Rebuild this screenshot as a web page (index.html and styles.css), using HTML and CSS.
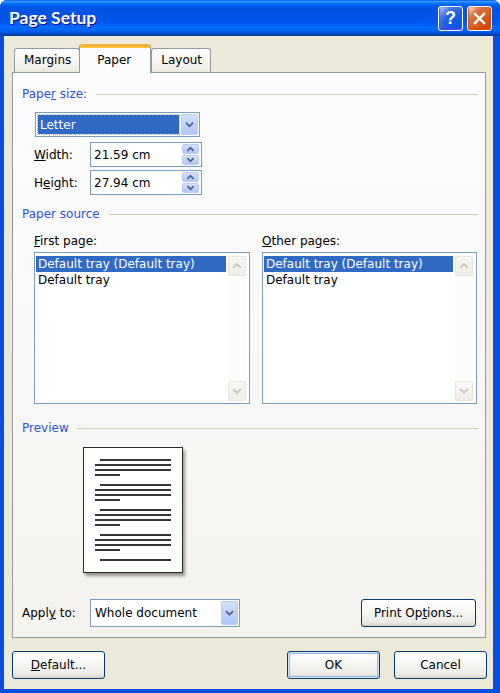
FILE: index.html
```html
<!DOCTYPE html>
<html>
<head>
<meta charset="UTF-8">
<title>Page Setup</title>
<link rel="stylesheet" href="styles.css">
</head>
<body>
<div class="window">
	<div class="titlebar">
		<span class="title">Page Setup</span>
		<span class="cap-btn help">?</span>
		<span class="cap-btn close">
			<svg width="13" height="13" viewBox="0 0 13 13"><path d="M2 2 L11 11 M11 2 L2 11" stroke="#fff" stroke-width="2.4" stroke-linecap="square"/></svg>
		</span>
	</div>
	<div class="client">
		<div class="tabs">
			<div class="tab">Margins</div>
			<div class="tab active">Paper</div>
			<div class="tab">Layout</div>
		</div>
		<div class="panel">
			<div class="group-head first"><span>Pape<u>r</u> size:</span></div>
			<div class="size-block">
				<div class="combo size-combo">
					<span class="combo-text"><span class="selected">Letter</span></span>
					<span class="drop"><svg width="17" height="21" viewBox="0 0 17 21"><path d="M4.5 8.5 L8.5 12.5 L12.5 8.5" fill="none" stroke="#4d6185" stroke-width="2"/></svg></span>
				</div>
				<div class="field-row">
					<span class="field-label"><u>W</u>idth:</span>
					<div class="spin">
						<span class="spin-text">21.59 cm</span>
						<span class="spin-btns">
							<span class="spin-btn"><svg width="17" height="10" viewBox="0 0 17 10"><path d="M5 7 L8.5 3.5 L12 7" fill="none" stroke="#4d6185" stroke-width="2"/></svg></span>
							<span class="spin-btn"><svg width="17" height="10" viewBox="0 0 17 10"><path d="M5 3 L8.5 6.5 L12 3" fill="none" stroke="#4d6185" stroke-width="2"/></svg></span>
						</span>
					</div>
				</div>
				<div class="field-row tight">
					<span class="field-label">H<u>e</u>ight:</span>
					<div class="spin">
						<span class="spin-text">27.94 cm</span>
						<span class="spin-btns">
							<span class="spin-btn"><svg width="17" height="10" viewBox="0 0 17 10"><path d="M5 7 L8.5 3.5 L12 7" fill="none" stroke="#4d6185" stroke-width="2"/></svg></span>
							<span class="spin-btn"><svg width="17" height="10" viewBox="0 0 17 10"><path d="M5 3 L8.5 6.5 L12 3" fill="none" stroke="#4d6185" stroke-width="2"/></svg></span>
						</span>
					</div>
				</div>
			</div>

			<div class="group-head source-head"><span>Paper source</span></div>
			<div class="sources">
				<div class="source">
					<div class="source-label"><u>F</u>irst page:</div>
					<div class="listbox">
						<div class="items">
							<div class="item selected">Default tray (Default tray)</div>
							<div class="item">Default tray</div>
						</div>
						<div class="vscroll">
							<span class="sb-btn"><svg width="17" height="20" viewBox="0 0 17 20"><path d="M4.5 12 L8.5 8 L12.5 12" fill="none" stroke="#c9c7ba" stroke-width="2"/></svg></span>
							<span class="sb-btn"><svg width="17" height="20" viewBox="0 0 17 20"><path d="M4.5 8 L8.5 12 L12.5 8" fill="none" stroke="#c9c7ba" stroke-width="2"/></svg></span>
						</div>
					</div>
				</div>
				<div class="source">
					<div class="source-label"><u>O</u>ther pages:</div>
					<div class="listbox">
						<div class="items">
							<div class="item selected">Default tray (Default tray)</div>
							<div class="item">Default tray</div>
						</div>
						<div class="vscroll">
							<span class="sb-btn"><svg width="17" height="20" viewBox="0 0 17 20"><path d="M4.5 12 L8.5 8 L12.5 12" fill="none" stroke="#c9c7ba" stroke-width="2"/></svg></span>
							<span class="sb-btn"><svg width="17" height="20" viewBox="0 0 17 20"><path d="M4.5 8 L8.5 12 L12.5 8" fill="none" stroke="#c9c7ba" stroke-width="2"/></svg></span>
						</div>
					</div>
				</div>
			</div>

			<div class="group-head preview-head"><span>Preview</span></div>
			<div class="sheet">
				<div class="para"><i class="ln indent"></i><i class="ln"></i><i class="ln"></i><i class="ln short"></i></div>
				<div class="para"><i class="ln indent"></i><i class="ln"></i><i class="ln"></i><i class="ln short"></i></div>
				<div class="para"><i class="ln indent"></i><i class="ln"></i><i class="ln"></i><i class="ln short"></i></div>
				<div class="para"><i class="ln indent"></i><i class="ln"></i><i class="ln"></i><i class="ln short"></i></div>
				<div class="para"><i class="ln indent"></i></div>
			</div>

			<div class="apply-row">
				<span class="apply-label">Appl<u>y</u> to:</span>
				<div class="combo apply-combo">
					<span class="combo-text">Whole document</span>
					<span class="drop"><svg width="17" height="24" viewBox="0 0 17 24"><path d="M4.5 10 L8.5 14 L12.5 10" fill="none" stroke="#4d6185" stroke-width="2"/></svg></span>
				</div>
				<button class="btn print-btn">Print Op<u>t</u>ions...</button>
			</div>
		</div>
		<div class="footer">
			<button class="btn"><u>D</u>efault...</button>
			<span class="spacer"></span>
			<button class="btn default">OK</button>
			<button class="btn">Cancel</button>
		</div>
	</div>
</div>
</body>
</html>
```

FILE: styles.css
```css
html, body {
	margin: 0;
	padding: 0;
	background: #ffffff;
}
body {
	font-family: "DejaVu Sans", Verdana, sans-serif;
	font-size: 12px;
	color: #000;
}
u {
	text-decoration: underline;
	text-underline-offset: 1px;
}
.window {
	width: 500px;
	height: 693px;
	display: flex;
	flex-direction: column;
	border-radius: 7px 7px 0 0;
	overflow: hidden;
	background: #0a4edf;
}

/* title bar */
.titlebar {
	height: 36px;
	flex: none;
	display: flex;
	align-items: center;
	padding: 0 8px 0 9px;
	gap: 4px;
	background: linear-gradient(to bottom, #0058ee 0%, #3593ff 4%, #288eff 6%, #127dff 8%, #036ffc 10%, #0262ee 14%, #0057e5 20%, #0054e3 24%, #0055eb 56%, #005bf5 66%, #026afe 76%, #0062ef 86%, #0052d6 92%, #0040ab 97%, #003092 100%);
}
.title {
	flex: 1;
	color: #fff;
	font-family: Lato, "Liberation Sans", sans-serif;
	font-weight: bold;
	font-size: 17.5px;
	text-shadow: 1px 1px #0f1089;
	padding-bottom: 1px;
}
.cap-btn {
	width: 23px;
	height: 23px;
	border: 1px solid #fff;
	border-radius: 3px;
	display: flex;
	align-items: center;
	justify-content: center;
	color: #fff;
	font-weight: bold;
	font-size: 18px;
	font-family: "Liberation Sans", sans-serif;
}
.help {
	background: radial-gradient(circle at 90% 90%, #0054e9 0%, #2263d5 55%, #4479e4 70%, #a3bbec 90%, #fff 100%);
	box-shadow: inset 0 -1px 2px 1px #4646ff;
}
.close {
	background: radial-gradient(circle at 90% 90%, #cc4600 0%, #dc6527 55%, #cd7546 70%, #ffccb2 90%, #fff 100%);
	box-shadow: inset 0 -1px 2px 1px #da4600;
}

/* client area */
.client {
	flex: 1;
	background: #ece9d8;
	margin: 0 7px 4px 4px;
	padding: 8px 7px 0 8px;
	display: flex;
	flex-direction: column;
}
.tabs {
	height: 28px;
	display: flex;
	align-items: flex-end;
	padding-left: 2px;
	position: relative;
	z-index: 1;
}
.tab {
	height: 23px;
	line-height: 22px;
	padding: 0 8px 0 9px;
	border: 1px solid #919b9c;
	border-bottom: none;
	border-radius: 3px 3px 0 0;
	background: linear-gradient(#fefefe, #f4f3ee 70%, #e8e7df);
	margin-right: -1px;
}
.tab.active {
	height: 26px;
	line-height: 26px;
	padding: 0 19px 0 17px;
	margin: 0 0 -1px 0;
	background: #fcfcfe;
	border-top: 3px solid #f8b33a;
	border-radius: 3px 3px 0 0;
	box-shadow: inset 0 1px 0 #ffc73c;
	position: relative;
}

.panel {
	height: 566px;
	box-sizing: border-box;
	border: 1px solid #919b9c;
	background: linear-gradient(#fcfcfe, #f4f3ee);
	padding: 0 9px 10px 9px;
	display: flex;
	flex-direction: column;
}
.group-head {
	height: 14px;
	line-height: 14px;
	display: flex;
	align-items: center;
	gap: 9px;
	color: #2c55d6;
	margin-right: -2px;
}
.group-head::after {
	content: "";
	flex: 1;
	height: 1px;
	background: #d0d0bf;
	margin-top: 1px;
}
.group-head.first { margin-top: 14px; }
.group-head.source-head { margin-top: 12px; }
.group-head.preview-head { margin-top: 17px; gap: 8px; }

.size-block {
	margin-left: 12px;
	margin-top: 11px;
}

/* combo box */
.combo {
	display: flex;
	box-sizing: border-box;
	border: 1px solid #7f9db9;
	background: #fff;
	padding: 1px;
}
.combo-text {
	flex: 1;
	display: flex;
	align-items: center;
	padding-left: 2px;
}
.combo-text .selected {
	flex: 1;
	align-self: stretch;
	display: flex;
	align-items: center;
	background: #316ac5;
	color: #fff;
	padding-left: 2px;
	margin: 1px 2px 1px -1px;
	outline: 1px dotted #9cb4e0;
}
.drop {
	width: 17px;
	flex: none;
	border-radius: 2px;
	border: 1px solid #b9ccf7;
	box-sizing: border-box;
	background: linear-gradient(#d3e0fc, #c1d3fb 50%, #b0c6f8);
	display: flex;
	align-items: center;
	justify-content: center;
}
.size-combo {
	width: 165px;
	height: 25px;
	margin-left: 1px;
}

.field-row {
	display: flex;
	align-items: center;
	margin-top: 5px;
	height: 25px;
}
.field-row.tight { margin-top: 3px; }
.field-label {
	width: 56px;
	flex: none;
}
.spin {
	width: 112px;
	height: 25px;
	box-sizing: border-box;
	border: 1px solid #7f9db9;
	background: #fff;
	display: flex;
	padding: 1px 1px 1px 0;
}
.spin-text {
	flex: 1;
	padding-left: 3px;
	display: flex;
	align-items: center;
}
.spin-btns {
	width: 17px;
	display: flex;
	flex-direction: column;
	gap: 1px;
	margin-right: 1px;
}
.spin-btn {
	flex: 1;
	border: 1px solid #b9ccf7;
	border-radius: 2px;
	background: linear-gradient(#d3e0fc, #c1d3fb 50%, #b0c6f8);
	display: flex;
	align-items: center;
	justify-content: center;
	overflow: hidden;
}

/* paper source lists */
.sources {
	margin-left: 12px;
	margin-top: 13px;
	display: grid;
	grid-template-columns: 216px 215px;
	column-gap: 12px;
}
.source-label {
	line-height: 15px;
	height: 15px;
	margin-bottom: 3px;
}
.listbox {
	height: 152px;
	box-sizing: border-box;
	border: 1px solid #7f9db9;
	background: #fff;
	display: flex;
	padding: 3px 3px 2px 1px;
}
.items {
	flex: 1;
	padding-right: 2px;
}
.item {
	height: 16px;
	line-height: 16px;
	padding-left: 2px;
	white-space: nowrap;
}
.item.selected {
	background: #316ac5;
	color: #fff;
}
.vscroll {
	width: 18px;
	display: flex;
	flex-direction: column;
	justify-content: space-between;
	background: #fcfcfb;
}
.sb-btn {
	height: 20px;
	box-sizing: border-box;
	border: 1px solid #e8e6dc;
	border-radius: 2px;
	background: linear-gradient(#f7f7f3, #efeee8);
	display: flex;
	align-items: center;
	justify-content: center;
}

/* preview */
.sheet {
	width: 100px;
	height: 126px;
	box-sizing: border-box;
	margin: 12px 0 0 61px;
	border: 1px solid #2c2c2c;
	background: #fff;
	box-shadow: 2px 3px 3px rgba(0, 0, 0, 0.4);
	padding-top: 11px;
}
.para {
	padding-bottom: 5px;
}
.ln {
	display: block;
	height: 2px;
	width: 76px;
	margin: 0 0 3px 11px;
	background: #363636;
}
.ln.indent {
	width: 71px;
	margin-left: 16px;
}
.ln.short {
	width: 25px;
}

/* apply row */
.apply-row {
	margin-top: 26px;
	height: 28px;
	display: flex;
	align-items: center;
}
.apply-label {
	width: 68px;
	flex: none;
}
.apply-combo {
	width: 150px;
	height: 28px;
}
.apply-combo .combo-text {
	padding-left: 3px;
}

/* buttons */
.btn {
	height: 28px;
	width: 93px;
	box-sizing: border-box;
	border: 1px solid #003c74;
	border-radius: 3px;
	background: linear-gradient(#ffffff, #f7f7f4 40%, #ecebe6 85%, #d6d0c5);
	font-family: "DejaVu Sans", Verdana, sans-serif;
	font-size: 12px;
	color: #000;
	padding: 0;
}
.btn.default {
	box-shadow: inset 0 0 0 1px #cee7ff, inset 0 0 0 2px #98b8ea;
}
.btn.print-btn {
	margin-left: auto;
	width: 115px;
}
.footer {
	margin-top: 13px;
	margin-right: -1px;
	display: flex;
	gap: 14px;
}
.footer .spacer {
	flex: 1;
}
```
